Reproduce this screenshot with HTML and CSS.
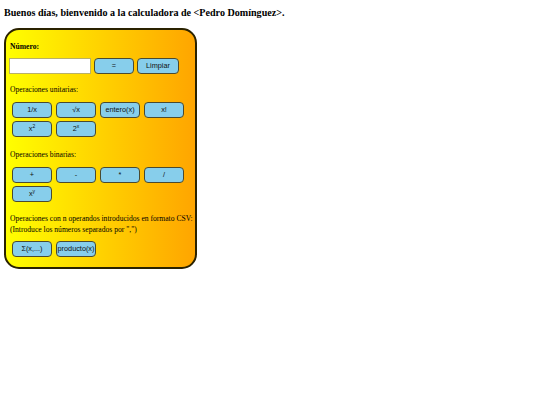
FILE: index.html
```html
<!DOCTYPE html>
<html lang="es">
<head>
<meta charset="utf-8">
<title>Calculadora</title>
<link rel="stylesheet" href="styles.css">
</head>
<body>
<h1 class="title">Buenos días, bienvenido a la calculadora de &lt;Pedro Domínguez&gt;.</h1>
<div class="calc">
  <div class="label strong">Número:</div>
  <div class="input-row">
    <input class="num" type="text">
    <button class="btn">=</button>
    <button class="btn wide">Limpiar</button>
  </div>
  <div class="label">Operaciones unitarias:</div>
  <div class="grid">
    <button class="btn">1/x</button>
    <button class="btn">√x</button>
    <button class="btn">entero(x)</button>
    <button class="btn">x!</button>
    <button class="btn">x<sup>2</sup></button>
    <button class="btn">2<sup>x</sup></button>
  </div>
  <div class="label">Operaciones binarias:</div>
  <div class="grid">
    <button class="btn">+</button>
    <button class="btn">-</button>
    <button class="btn">*</button>
    <button class="btn">/</button>
    <button class="btn">x<sup>y</sup></button>
  </div>
  <div class="label multi">Operaciones con n operandos introducidos en formato CSV:<br>(Introduce los números separados por ",")</div>
  <div class="grid last">
    <button class="btn">Σ(x,...)</button>
    <button class="btn">producto(x)</button>
  </div>
</div>
</body>
</html>
```
FILE: styles.css
```css
body {
  margin: 4px;
  font-family: "Liberation Serif", "Times New Roman", serif;
  background: #ffffff;
  color: #000;
}
.title {
  font-size: 10.1px;
  font-weight: bold;
  margin: 3px 0 9px 0;
  line-height: 12px;
}
.calc {
  width: 187px;
  height: 237px;
  border: 2px solid #2a2200;
  border-radius: 15px;
  background: linear-gradient(to right, #ffff00, #ffa500);
  padding: 0 0 0 2px;
  box-sizing: content-box;
  display: flex;
  flex-direction: column;
}
.label {
  font-size: 7.6px;
  line-height: 10px;
  margin-left: 2px;
  color: #000;
  white-space: nowrap;
}
.strong {
  font-weight: bold;
  margin-top: 12px;
}
.input-row {
  display: flex;
  gap: 3px;
  margin-top: 6px;
  margin-left: 1px;
  align-items: center;
}
.num {
  width: 80px;
  height: 14px;
  box-sizing: content-box;
  padding: 0;
  margin: 0;
  border: 1px solid #b8b06a;
  background: #fff;
}
.btn {
  width: 40px;
  height: 16px;
  margin: 0;
  padding: 0;
  border: 1px solid #4a4a30;
  border-radius: 4px;
  background: #87ceeb;
  font-family: "Liberation Sans", Arial, sans-serif;
  font-size: 7.3px;
  color: #111;
  line-height: 14px;
}
.btn.wide {
  width: 42px;
}
.btn sup {
  font-size: 5px;
  line-height: 0;
  vertical-align: 3px;
}
.input-row + .label {
  margin-top: 11px;
}
.grid {
  display: flex;
  flex-wrap: wrap;
  gap: 3px 4px;
  width: 180px;
  margin: 7px 0 0 4px;
}
.grid + .label {
  margin-top: 13px;
}
.grid + .label.multi {
  margin-top: 11px;
}
.multi {
  line-height: 11px;
}
.grid.last {
  margin-top: 6px;
}
```
